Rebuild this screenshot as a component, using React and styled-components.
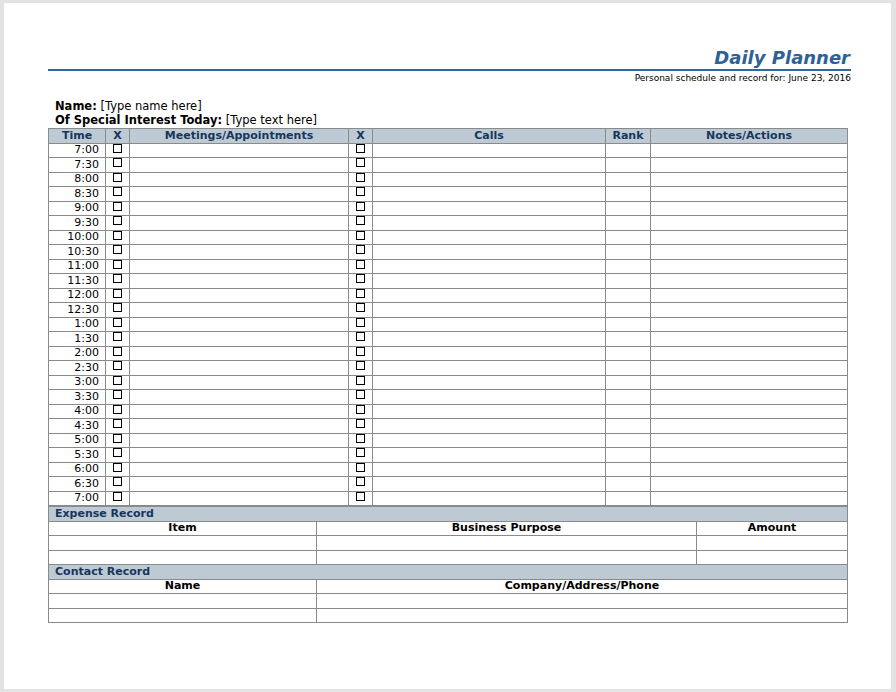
import React from 'react';
import styled, { createGlobalStyle } from 'styled-components';

const Global = createGlobalStyle`
  html, body { margin: 0; background: #e3e3e3; }
  body { font-family: "DejaVu Sans", Verdana, sans-serif; }
`;

const Page = styled.div`
  margin: 3px 5px 0 4px;
  width: 887px;
  height: 686px;
  background: #fff;
  box-sizing: border-box;
  padding: 44px 0 0 44px;
`;

const Header = styled.div`
  width: 803px;
  display: flex;
  flex-direction: column;
  align-items: flex-end;
`;

const Title = styled.div`
  font-size: 18px;
  font-weight: bold;
  font-style: italic;
  color: #2f6195;
  line-height: 22px;
  padding-right: 1px;
`;

const Rule = styled.div`
  align-self: stretch;
  height: 2px;
  background: #336699;
`;

const Sub = styled.div`
  font-size: 9px;
  line-height: 14px;
  color: #000;
`;

const Info = styled.div`
  margin-top: 14px;
  margin-bottom: 1px;
  padding-left: 7px;
  font-size: 11.5px;
  line-height: 14px;
  b { font-weight: bold; }
`;

const Table = styled.table`
  width: 800px;
  border-collapse: collapse;
  table-layout: fixed;
  font-size: 11px;
  td, th {
    border: 1px solid #8a8a8a;
    height: 13.5px;
    padding: 0;
    line-height: 12px;
    overflow: hidden;
    white-space: nowrap;
  }
`;

const Th = styled.th`
  background: ${p => (p.$blue ? '#bdcad4' : '#fff')};
  color: ${p => (p.$blue ? '#17365d' : '#000')};
  font-weight: bold;
  text-align: ${p => p.$left ? 'left' : 'center'};
  padding-left: ${p => p.$left ? '6px' : '0'} !important;
`;

const Time = styled.td`
  text-align: right;
  padding-right: 6px !important;
`;

const Box = styled.td`
  text-align: center;
  &::before {
    content: '';
    display: inline-block;
    width: 7px;
    height: 7px;
    border: 1px solid #000;
    vertical-align: 1px;
  }
`;

const times = ['7:00','7:30','8:00','8:30','9:00','9:30','10:00','10:30','11:00','11:30','12:00','12:30','1:00','1:30','2:00','2:30','3:00','3:30','4:00','4:30','5:00','5:30','6:00','6:30','7:00'];

export default function App() {
  return (
    <>
      <Global />
      <Page>
        <Header>
          <Title>Daily Planner</Title>
          <Rule />
          <Sub>Personal schedule and record for: June 23, 2016</Sub>
        </Header>
        <Info>
          <div><b>Name:</b> [Type name here]</div>
          <div><b>Of Special Interest Today:</b> [Type text here]</div>
        </Info>
        <Table>
          <colgroup>
            <col style={{ width: 57 }} /><col style={{ width: 24 }} /><col style={{ width: 219 }} />
            <col style={{ width: 24 }} /><col style={{ width: 233 }} /><col style={{ width: 45 }} /><col />
          </colgroup>
          <thead>
            <tr>
              <Th $blue>Time</Th><Th $blue>X</Th><Th $blue>Meetings/Appointments</Th>
              <Th $blue>X</Th><Th $blue>Calls</Th><Th $blue>Rank</Th><Th $blue>Notes/Actions</Th>
            </tr>
          </thead>
          <tbody>
            {times.map((t, i) => (
              <tr key={i}>
                <Time>{t}</Time><Box /><td /><Box /><td /><td /><td />
              </tr>
            ))}
          </tbody>
        </Table>
        <Table>
          <colgroup>
            <col style={{ width: 268 }} /><col style={{ width: 380 }} /><col />
          </colgroup>
          <tbody>
            <tr><Th $blue $left colSpan={3}>Expense Record</Th></tr>
            <tr><Th>Item</Th><Th>Business Purpose</Th><Th>Amount</Th></tr>
            <tr><td /><td /><td /></tr>
            <tr><td /><td /><td /></tr>
            <tr><Th $blue $left colSpan={3}>Contact Record</Th></tr>
            <tr><Th>Name</Th><Th colSpan={2}>Company/Address/Phone</Th></tr>
            <tr><td /><td colSpan={2} /></tr>
            <tr><td /><td colSpan={2} /></tr>
          </tbody>
        </Table>
      </Page>
    </>
  );
}
